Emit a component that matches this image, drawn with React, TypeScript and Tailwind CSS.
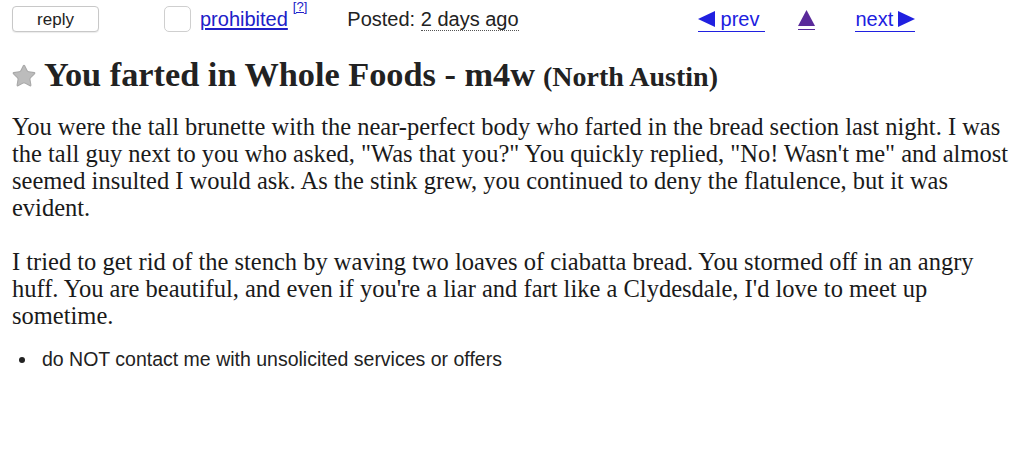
import { Star } from "lucide-react";

const Tri = ({ dir, color }: { dir: "left" | "right" | "up"; color: string }) => {
  const pts = dir === "left" ? "0,8 17,0 17,16" : dir === "right" ? "0,0 17,8 0,16" : "8.5,0 17,16 0,16";
  return (
    <svg width="17" height="16" viewBox="0 0 17 16" className="shrink-0">
      <polygon points={pts} fill={color} />
    </svg>
  );
};

const Nav = () => {
  return (
    <div className="flex h-[38px] items-center pl-[12px] font-['Liberation_Sans',Arial,sans-serif] text-[#222]">
      {/* reply button */}
      <button className="h-[26px] w-[87px] rounded-[4px] border border-[#c8c8c8] bg-white text-[17px] text-[#222] shadow-[0_1px_1px_rgba(0,0,0,0.08)]">
        reply
      </button>
      {/* flag box */}
      <div className="ml-[65px] h-[26px] w-[27px] rounded-[5px] border border-[#cfcfcf]" />
      <a className="ml-[9px] text-[20px] text-[#2020c8] underline underline-offset-2">prohibited</a>
      <sup className="ml-[5px] -mt-[12px] text-[13px] text-[#2020c8] underline">[?]</sup>
      <div className="ml-[40px] text-[20px]">
        Posted:{" "}
        <span className="border-b border-dotted border-[#555]">2 days ago</span>
      </div>
      <a className="ml-[179px] mt-[2px] flex items-center gap-[6px] border-b border-[#2020e0] pr-[6px] pb-[1px] text-[20px] leading-[22px] text-[#2020e0]">
        <Tri dir="left" color="#2020e0" />
        prev
      </a>
      <span className="ml-[33px] mt-[2px] border-b border-[#5a2a9a] pb-[3px]">
        <Tri dir="up" color="#5a2a9a" />
      </span>
      <a className="ml-[40px] mt-[2px] flex items-center gap-[5px] border-b border-[#2020e0] pb-[1px] text-[20px] leading-[22px] text-[#2020e0]">
        next
        <Tri dir="right" color="#2020e0" />
      </a>
    </div>
  );
};

const App = () => {
  return (
    <div className="h-[462px] w-[1022px] overflow-hidden bg-white text-[#222]">
      <Nav />
      {/* Title */}
      <h2 className="mt-[18px] flex items-baseline pl-[11px] font-['Liberation_Serif','Times_New_Roman',serif] font-bold text-[#222]">
        <Star className="mr-[7px] h-[26px] w-[26px] self-center fill-[#bcbcbc] text-[#a8a8a8]" strokeWidth={1} />
        <span className="text-[34.3px] leading-[36px]">You farted in Whole Foods - m4w</span>
        <span className="ml-[8px] text-[28px] leading-[36px]">(North Austin)</span>
      </h2>

      {/* Body */}
      <section className="mt-[18px] pl-[12px] pr-[8px] font-['Liberation_Serif','Times_New_Roman',serif] text-[24.5px] leading-[27px] text-[#1a1a1a]">
        <p>
          You were the tall brunette with the near-perfect body who farted in the bread section last night. I was
          the tall guy next to you who asked, "Was that you?" You quickly replied, "No! Wasn't me" and almost
          seemed insulted I would ask. As the stink grew, you continued to deny the flatulence, but it was
          evident.
        </p>
        <p className="mt-[27px]">
          I tried to get rid of the stench by waving two loaves of ciabatta bread. You stormed off in an angry
          huff. You are beautiful, and even if you're a liar and fart like a Clydesdale, I'd love to meet up
          sometime.
        </p>
      </section>

      {/* Notices */}
      <ul className="mt-[16px] pl-[19px] font-['Liberation_Sans',Arial,sans-serif] text-[19.5px] text-[#222]">
        <li className="flex items-center">
          <span className="h-[6px] w-[6px] rounded-full bg-[#222]" />
          <span className="ml-[17px]">do NOT contact me with unsolicited services or offers</span>
        </li>
      </ul>
    </div>
  );
};

export default App;
